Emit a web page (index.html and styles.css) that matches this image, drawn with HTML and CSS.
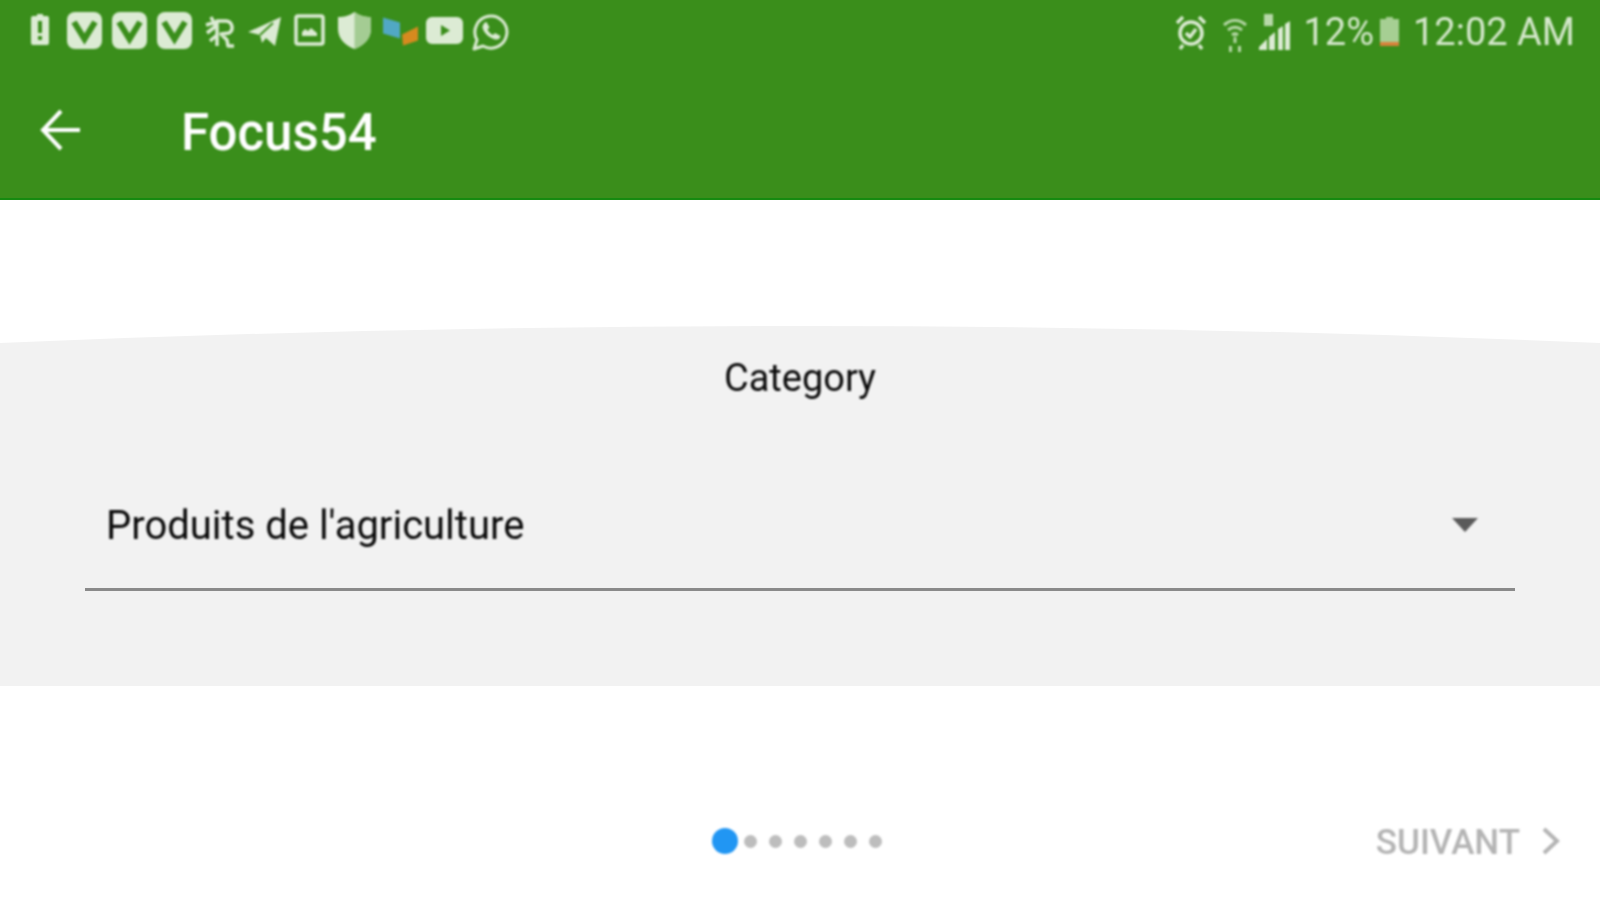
FILE: index.html
```html
<!DOCTYPE html>
<html lang="en">
<head>
<meta charset="utf-8">
<title>Focus54</title>
<link rel="stylesheet" href="styles.css">
</head>
<body>
<div class="app">
  <div class="top">
    <div class="status">
      <div class="status-left">
        <svg class="cell" viewBox="0 0 45 45"><path class="f" fill-rule="evenodd" d="M16 8h4V6h6v2h4a2 2 0 0 1 2 2v25a2 2 0 0 1-2 2H16a2 2 0 0 1-2-2V10a2 2 0 0 1 2-2zM21 13v12h4V13zM21 28v4h4v-4z"/></svg>
        <svg class="cell" viewBox="0 0 45 45"><rect class="f" x="5" y="4" width="35" height="37" rx="8"/><path class="v" d="M12 14l10.500 17L33 14"/></svg>
        <svg class="cell" viewBox="0 0 45 45"><rect class="f" x="5" y="4" width="35" height="37" rx="8"/><path class="v" d="M12 14l10.500 17L33 14"/></svg>
        <svg class="cell" viewBox="0 0 45 45"><rect class="f" x="5" y="4" width="35" height="37" rx="8"/><path class="v" d="M12 14l10.500 17L33 14"/></svg>
        <svg class="cell" viewBox="0 0 45 45"><path class="s" d="M9 17l10-3M14 9l4 8M20 38V13h9a6.500 6.500 0 0 1 3 12l-8 1 6 6 1 6h6M10 25l9-7M20 27l-7 6"/></svg>
        <svg class="cell" viewBox="0 0 45 45"><path class="f" d="M6 24L39 9l-6 29-9-8-4 5-2-8z"/><path class="cut" d="M18 27l13-12"/></svg>
        <svg class="cell" viewBox="0 0 45 45"><rect class="s" x="9" y="8" width="27" height="28" rx="2"/><path class="f" d="M15 28v-4l3-3 3 2 3-3 6 5v3z"/></svg>
        <svg class="cell" viewBox="0 0 45 45"><path class="f" d="M22.500 4C28 8 33 9 39 9v12c0 10-8 17-16.500 20C14 38 6 31 6 21V9c6 0 11-1 16.500-5z"/><path class="shade" d="M22.500 4C28 8 33 9 39 9v12c0 10-8 17-16.500 20z"/></svg>
        <svg class="cell" viewBox="0 0 45 45"><path class="flag-b" d="M6 9.500l17 5v16l-17-5z"/><path class="flag-o" d="M25 26.500l16-8v14l-15 5z"/></svg>
        <svg class="cell" viewBox="0 0 45 45"><path class="f" fill-rule="evenodd" d="M10 9h25a6 6 0 0 1 6 6v15a6 6 0 0 1-6 6H10a6 6 0 0 1-6-6V15a6 6 0 0 1 6-6zM19 17v11l9-5.500z"/></svg>
        <svg class="cell" viewBox="0 0 45 45"><path class="s thin" d="M7 41l3-9a16 16 0 1 1 6 6z"/><path class="f" d="M17 15l2.500-1 3 5.500-2 2c1 2.500 3 4.500 5.500 5.500l2-2 5.500 3-1 2.500c-2 2-5.500 1-9-1-4.500-2.500-7-6-8-10 0-2 1-3.500 2-4.500z"/></svg>
      </div>
      <div class="status-right">
        <svg class="cell-r" viewBox="0 0 44 45"><circle class="s" cx="22" cy="25" r="11"/><path class="s" d="M8 15l6-6M36 15l-6-6M14 37l-3 4M30 37l3 4M17 25l4 4 6-8"/></svg>
        <svg class="cell-r" viewBox="0 0 44 45"><path class="dim" d="M11 16c7-6 15-6 22 0M15 21c4.500-3.500 9.500-3.500 14 0M19 26c2-1.500 4-1.500 6 0M22 29v5"/><path class="dim-f" d="M20.500 29l1.500-2 1.500 2zM16 37h3v6h-3zM25 37h3v6h-3z"/></svg>
        <svg class="cell-s" viewBox="0 0 34 45"><path class="dim-f" d="M7 5h9v12H7z"/><path class="f" d="M2 38l8-8v11H2zM12 28l6-5v18h-6zM21 20l5-3v24h-5zM28 15l5-3v29h-5z"/></svg>
        <span class="pct">12%</span>
        <svg class="batt" viewBox="0 0 19 30"><path class="batt-f" d="M6 0h7v2h6v24H0V2h6z"/><path class="batt-o" d="M0 25h19v4H0z"/></svg>
        <span class="clock">12:02 AM</span>
      </div>
    </div>
    <div class="toolbar">
      <svg class="back" viewBox="0 0 42 44"><path d="M40 22H3M21 3L3 22l18 19"/></svg>
      <span class="title">Focus54</span>
    </div>
  </div>
  <div class="card-wrap">
    <svg class="curve" viewBox="0 0 1600 18" preserveAspectRatio="none"><path d="M0 18Q800-16 1600 18Z"/></svg>
    <div class="card">
      <div class="label">Category</div>
      <div class="select">
        <span class="select-text">Produits de l'agriculture</span>
        <span class="tri"></span>
      </div>
    </div>
  </div>
  <div class="foot">
    <div class="foot-side"></div>
    <div class="dots">
      <span class="dot on"></span><span class="dot"></span><span class="dot"></span><span class="dot"></span><span class="dot"></span><span class="dot"></span><span class="dot"></span>
    </div>
    <div class="foot-side next">
      <span>SUIVANT</span>
      <svg class="chev" viewBox="0 0 20 30"><path d="M3 3l13 12L3 27"/></svg>
    </div>
  </div>
</div>
</body>
</html>
```
FILE: styles.css
```css
* { box-sizing: border-box; }
html, body { margin: 0; height: 100%; background: #fff; overflow: hidden; }
.app {
  width: 1600px; height: 900px; display: flex; flex-direction: column;
  font-family: Roboto, "Liberation Sans", sans-serif;
}
.status-left, .status-right, .toolbar, .label, .select-text, .tri, .dots, .next { filter: blur(0.9px); }
.top { height: 200px; background: #3a8e1b; border-bottom: 2px solid #168a10; display: flex; flex-direction: column; }
.status { height: 62px; display: flex; justify-content: space-between; align-items: center; color: #d5e8cc; padding: 0 25px 0 17px; }
.status-left, .status-right { display: flex; align-items: center; }
.status-left { padding-bottom: 2px; }
.status-right { padding-top: 2px; }
.cell { width: 45px; height: 45px; display: block; }
.cell-r { width: 44px; height: 45px; display: block; margin: -3px 0 0 1px; }
.cell-r + .cell-r { margin: -1px 0 0 0; }
.cell-s { width: 34px; height: 45px; display: block; margin: -2px 12px 0 0; }
.f { fill: #dcebd4; }
.s { fill: none; stroke: #dcebd4; stroke-width: 3.500; stroke-linejoin: round; }
.thin { stroke-width: 3; }
.v { fill: none; stroke: #3a8e1b; stroke-width: 6; }
.cut { fill: none; stroke: #3a8e1b; stroke-width: 2; }
.shade { fill: #a4cc93; }
.flag-b { fill: #51a8c4; }
.flag-o { fill: #d78a1f; }
.dim { fill: none; stroke: #b7d8a8; stroke-width: 3; }
.dim-f { fill: #b7d8a8; }
.batt { width: 19px; height: 30px; display: block; margin: 0 14px 0 6px; }
.batt-f { fill: #a6cf93; }
.batt-o { fill: #d9823a; }
.pct, .clock { font-size: 38px; line-height: 45px; white-space: nowrap; }
.toolbar { flex: 1; display: flex; align-items: center; padding: 0 0 0 40px; }
.back { width: 42px; height: 44px; fill: none; stroke: #fff; stroke-width: 4; margin-right: 99px; }
.title { color: #fff; font-size: 51px; font-weight: 500; line-height: 60px; padding-top: 6px; }
.card-wrap { margin-top: 125px; display: flex; flex-direction: column; }
.curve { display: block; width: 1600px; height: 18px; fill: #f2f2f2; }
.card { height: 343px; background: #f2f2f2; display: flex; flex-direction: column; align-items: center; }
.label { font-size: 38px; line-height: 44px; color: #0a0a0a; margin-top: 13px; }
.select {
  width: 1430px; height: 146px; margin-top: 45px; padding: 17px 37px 0 21px;
  border-bottom: 3px solid #8a8a8a; display: flex; align-items: center; justify-content: space-between;
}
.select-text { font-size: 40px; line-height: 46px; color: #0a0a0a; margin-top: 2px; }
.tri { width: 0; height: 0; border-left: 13px solid transparent; border-right: 13px solid transparent; border-top: 14px solid #5a5a5a; }
.foot { flex: 1; display: grid; grid-template-columns: 1fr auto 1fr; align-items: center; padding: 96px 39px 0 33px; }
.dots { display: flex; align-items: center; gap: 12px; }
.dot { width: 13px; height: 13px; border-radius: 50%; background: #bdbdbd; }
.dot.on { width: 26px; height: 26px; background: #2196f3; margin-right: -6px; }
.next { display: flex; justify-content: flex-end; align-items: center; color: #b4b4b4; font-size: 35px; font-weight: 500; gap: 21px; padding-top: 2px; }
.chev { width: 20px; height: 30px; fill: none; stroke: #b4b4b4; stroke-width: 4; margin-top: -2px; }
```
